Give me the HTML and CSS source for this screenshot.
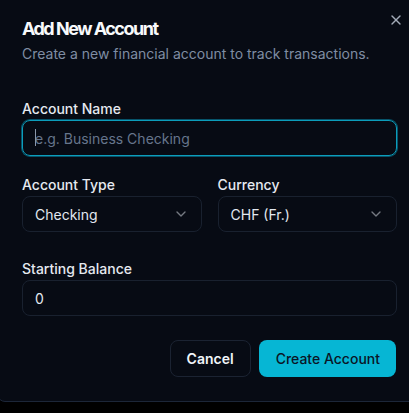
FILE: index.html
```html
<!DOCTYPE html>
<html lang="en">
<head>
<meta charset="utf-8">
<title>Add New Account</title>
<link rel="stylesheet" href="styles.css">
</head>
<body>
<div class="dialog" role="dialog" aria-labelledby="dlg-title">
  <button class="close" type="button" aria-label="Close">
    <svg viewBox="0 0 24 24" width="16" height="16" fill="none" stroke="currentColor" stroke-width="2" stroke-linecap="round" stroke-linejoin="round"><path d="M18 6 6 18"/><path d="m6 6 12 12"/></svg>
  </button>
  <header class="header">
    <h2 id="dlg-title" class="title">Add New Account</h2>
    <p class="desc">Create a new financial account to track transactions.</p>
  </header>
  <form class="form">
    <div class="field field-name">
      <label class="label" for="acc-name">Account Name</label>
      <div class="input-wrap">
        <input id="acc-name" class="input input-focus" type="text" placeholder="e.g. Business Checking">
        <span class="caret"></span>
      </div>
    </div>
    <div class="row">
      <div class="field">
        <label class="label">Account Type</label>
        <button type="button" class="select">
          <span>Checking</span>
          <svg class="chev" viewBox="0 0 24 24" width="16" height="16" fill="none" stroke="currentColor" stroke-width="2" stroke-linecap="round" stroke-linejoin="round"><path d="m6 9 6 6 6-6"/></svg>
        </button>
      </div>
      <div class="field">
        <label class="label">Currency</label>
        <button type="button" class="select">
          <span>CHF (Fr.)</span>
          <svg class="chev" viewBox="0 0 24 24" width="16" height="16" fill="none" stroke="currentColor" stroke-width="2" stroke-linecap="round" stroke-linejoin="round"><path d="m6 9 6 6 6-6"/></svg>
        </button>
      </div>
    </div>
    <div class="field field-balance">
      <label class="label" for="acc-bal">Starting Balance</label>
      <input id="acc-bal" class="input" type="text" value="0">
    </div>
    <div class="actions">
      <button type="button" class="btn btn-outline">Cancel</button>
      <button type="submit" class="btn btn-primary">Create Account</button>
    </div>
  </form>
</div>
</body>
</html>
```
FILE: styles.css
```css
* { box-sizing: border-box; }

html, body {
  margin: 0;
  padding: 0;
  background: #000000;
  overflow: hidden;
  font-family: Inter, "Noto Sans", "Liberation Sans", sans-serif;
}

.dialog {
  position: relative;
  width: 425px;
  margin: -5px 0 0 -3px;
  padding: 24px;
  background: #070b14;
  border: 1px solid #1c2638;
  border-radius: 8px;
  color: #f1f5f9;
}

.close {
  position: absolute;
  top: 16px;
  right: 17px;
  width: 16px;
  height: 16px;
  padding: 0;
  border: 0;
  background: none;
  color: #a3abb8;
  display: flex;
}

.header {
  display: flex;
  flex-direction: column;
  gap: 6px;
}

.title {
  margin: 0;
  font-size: 18px;
  line-height: 18px;
  font-weight: 700;
  letter-spacing: -1.5px;
  color: #f8fafc;
}

.desc {
  margin: 0;
  font-size: 14px;
  line-height: 20px;
  color: #7f8da3;
}

.form {
  display: flex;
  flex-direction: column;
  margin: 38px 0 0;
}

.field {
  display: flex;
  flex-direction: column;
  gap: 4px;
}

.label {
  font-size: 14px;
  line-height: 14px;
  font-weight: 500;
  color: #e5e9f0;
}

.input-wrap {
  position: relative;
}

.input {
  width: 100%;
  height: 36px;
  padding: 0 12px;
  border: 1px solid #19212f;
  border-radius: 8px;
  background: transparent;
  font: inherit;
  font-size: 14px;
  color: #e2e8f0;
  outline: none;
}

.input::placeholder {
  color: #66758c;
}

.input-focus {
  border-color: #0c9dbb;
  box-shadow: 0 0 0 1px rgba(8, 145, 178, 0.55);
}

.caret {
  position: absolute;
  left: 13px;
  top: 9px;
  width: 1px;
  height: 17px;
  background: #8a97aa;
}

.row {
  display: grid;
  grid-template-columns: 1fr 1fr;
  gap: 16px;
  margin-top: 22px;
}

.select {
  display: flex;
  align-items: center;
  justify-content: space-between;
  height: 36px;
  padding: 0 12px;
  border: 1px solid #19212f;
  border-radius: 8px;
  background: transparent;
  font: inherit;
  font-size: 14px;
  color: #e2e8f0;
  text-align: left;
}

.chev {
  color: #e2e8f0;
  opacity: 0.5;
  flex: none;
}

.field-balance {
  margin-top: 30px;
}

.actions {
  display: flex;
  justify-content: flex-end;
  gap: 8px;
  margin-top: 24px;
  margin-right: 1px;
}

.btn {
  height: 37px;
  padding: 0 16px;
  border-radius: 8px;
  font: inherit;
  font-size: 14px;
  font-weight: 500;
}

.btn-outline {
  border: 1px solid #1b2332;
  background: transparent;
  color: #f1f5f9;
  font-weight: 600;
}

.btn-primary {
  border: 0;
  background: #06b6d4;
  color: #0b1526;
  padding: 0 16px 0 17px;
}
```
